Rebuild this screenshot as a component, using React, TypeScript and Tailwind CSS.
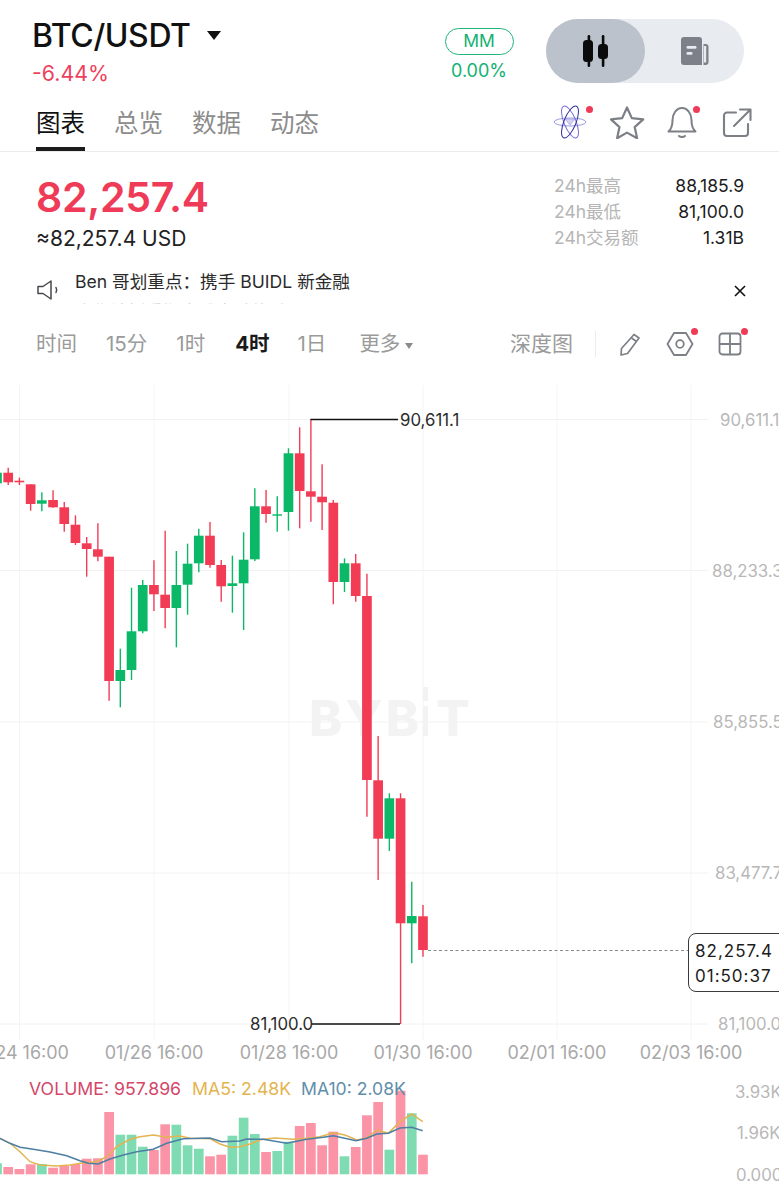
import React from 'react';

// top wick, body top, body bottom, bottom wick, up?, volume top
type Candle = [number, number, number, number, boolean, number];

const CANDLES: Candle[] = [
  [470, 472.7, 483.3, 484, true, 1163.3],
  [467.7, 472.7, 482.3, 485, false, 1167],
  [477.7, 480.7, 482.3, 485, false, 1169],
  [484.3, 484.3, 504, 510.7, false, 1164.3],
  [492.3, 500.3, 503.7, 511.3, true, 1164],
  [490.3, 500, 507.3, 507.7, false, 1167.7],
  [502, 507.3, 524, 531.7, false, 1166],
  [515.3, 524.7, 543, 545, false, 1164],
  [537, 543.3, 549, 576.7, false, 1158.7],
  [523.3, 549.3, 556.7, 561.3, false, 1158.3],
  [556.7, 556.7, 681, 700.7, false, 1112],
  [648.7, 670, 681, 707.3, true, 1134.7],
  [587.7, 631.3, 670, 680, true, 1134.7],
  [580, 585, 631.3, 633.3, true, 1146.7],
  [560.3, 585, 594.3, 611, false, 1150],
  [530.7, 594.7, 608, 628.3, false, 1124.3],
  [551, 585, 608, 647.3, true, 1124.7],
  [543.7, 563.7, 584.7, 614.7, true, 1145.3],
  [528.7, 535.7, 563.3, 572.3, true, 1148.7],
  [522, 535.7, 565, 567.7, false, 1156.3],
  [560, 565, 586.3, 601.7, false, 1154.7],
  [555.7, 583.3, 586, 612.7, true, 1135.7],
  [532.3, 559.7, 583.3, 630, true, 1117.7],
  [488.3, 506.3, 559.3, 561, true, 1134],
  [490, 506.3, 514, 522.7, false, 1152],
  [496.3, 514.3, 515.7, 531.7, true, 1151],
  [448.3, 453.3, 512, 530.7, true, 1141.7],
  [427.3, 453.3, 491, 528.3, false, 1126],
  [419.3, 491.3, 496.7, 521.7, false, 1123],
  [464.3, 496.7, 502.3, 530, false, 1145.3],
  [500, 502.7, 582, 604.3, false, 1131.7],
  [558.3, 563.3, 582, 592, true, 1156.3],
  [554, 563.3, 596, 601.7, false, 1147],
  [573.7, 596, 780, 816.7, false, 1115.3],
  [736, 780.3, 838.7, 880, false, 1102],
  [793.3, 798.3, 838.7, 851, true, 1149.7],
  [793.3, 798.3, 923.3, 1024, false, 1090.7],
  [881.7, 916, 923.3, 963.3, true, 1113.3],
  [905, 916.3, 950, 956.7, false, 1154.7],
];

const candleX = (i: number) => -3 + i * 11.21;

const MA5 =
  '0,1138.3 10,1143.3 20,1151.7 30,1161.7 40,1165 56.7,1166 70,1165 83.3,1162.7 96.7,1161.7 106.7,1156.7 116.7,1146.7 130,1139.3 140,1136.7 153.3,1135 166.7,1137.3 180,1136 190,1138.3 210,1138.7 220,1144 230,1147.3 240,1146.7 250,1144 260,1140 263.3,1139.3 275,1138 293.3,1139.3 306.7,1138.3 320,1136.7 333.3,1132.7 345,1135 356.7,1140 366.7,1138.3 376.7,1130 388.3,1133.3 400,1121.7 411.7,1114 422.7,1121.7';
const MA10 =
  '0,1138.3 10,1143.3 20,1147.3 33.3,1149.3 50,1152 66.7,1155.7 80,1160.7 88.3,1163.3 98.3,1164 110,1159 123.3,1155 136.7,1151.7 153.3,1149.3 166.7,1143.3 183.3,1138.7 210,1138 221.7,1141.7 240,1141 246.7,1139 263.3,1139.3 286.7,1143.3 306.7,1139.3 323.3,1137.3 333.3,1135.7 356,1140.7 366.7,1138.3 376.7,1134 388.3,1133.3 400,1128 411.7,1127.3 422.7,1130.7';

const GRID_Y = [419.5, 570.5, 722, 873, 1024];
const GRID_X = [19.5, 154, 289, 423, 557, 691];
const PRICES: [string, number, number][] = [
  ['90,611.1', 720, 426],
  ['88,233.3', 712, 577],
  ['85,855.5', 713, 728],
  ['83,477.7', 715, 879],
  ['81,100.0', 718, 1030],
];
const TIMES: [string, number][] = [
  ['01/24 16:00', 19.5],
  ['01/26 16:00', 154],
  ['01/28 16:00', 289],
  ['01/30 16:00', 423],
  ['02/01 16:00', 557],
  ['02/03 16:00', 691],
];

const RedDot = ({ className }: { className: string }) => (
  <span className={`absolute w-[7px] h-[7px] rounded-full bg-[#ef3b57] ${className}`} />
);

const CandleIcon = () => (
  <svg width="26" height="32" viewBox="0 0 26 32" fill="#0b0b0b">
    <rect x="4.600" y="0" width="2.600" height="32" rx="1.300" />
    <rect x="0" y="5" width="10" height="22" rx="3.500" />
    <rect x="18.800" y="0" width="2.600" height="32" rx="1.300" />
    <rect x="15" y="9" width="10" height="15" rx="3.500" />
  </svg>
);

const NewsIcon = () => (
  <svg width="28" height="28" viewBox="0 0 28 28">
    <path d="M3 0h15a3 3 0 0 1 3 3v25H3a3 3 0 0 1-3-3V3a3 3 0 0 1 3-3z" fill="#7d8088" />
    <path d="M22.500 7h2a3 3 0 0 1 3 3v15a3 3 0 0 1-3 3h-2z" fill="#7d8088" />
    <rect x="23" y="9" width="2.200" height="16.500" fill="#e8ebf0" />
    <rect x="5.500" y="9" width="10" height="2.800" rx="1.200" fill="#e8ebf0" />
    <rect x="5.500" y="15" width="6" height="2.800" rx="1.200" fill="#e8ebf0" />
  </svg>
);

const AtomIcon = () => (
  <svg width="36" height="34" viewBox="0 0 36 34" fill="none" strokeWidth="1">
    <ellipse cx="18" cy="17" rx="16" ry="4" stroke="#9a9ae6" />
    <ellipse cx="18" cy="17" rx="6" ry="17" transform="rotate(-22 18 17)" stroke="#7a6ed8" />
    <ellipse cx="18" cy="17" rx="6" ry="17" transform="rotate(22 18 17)" stroke="#2f2f9e" />
    <path d="M13 14h10l-5 6z" fill="#d6d2f4" stroke="#8f8fe0" strokeWidth="0.600" />
  </svg>
);

const StarIcon = () => (
  <svg width="36" height="34" viewBox="0 0 36 34" fill="none" stroke="#7c7f85" strokeWidth="2.200" strokeLinejoin="round">
    <path d="M18 2.500l4.800 10.600 11.400 1.300-8.500 7.700 2.400 11.200L18 27.600l-9.900 5.700 2.400-11.200L2 14.400l11.200-1.300z" />
  </svg>
);

const BellIcon = () => (
  <svg width="30" height="34" viewBox="0 0 30 34" fill="none" stroke="#7c7f85" strokeWidth="2" strokeLinecap="round" strokeLinejoin="round">
    <path d="M1.500 26.500h27c-3-2.500-4-6-4-11.500 0-6-3.900-12-9.500-12S5.500 9 5.500 15c0 5.500-1 9-4 11.500z" />
    <path d="M12 31c1.500 1.300 4.500 1.300 6 0" />
  </svg>
);

const ShareIcon = () => (
  <svg width="30" height="30" viewBox="0 0 30 30" fill="none" stroke="#7c7f85" strokeWidth="2.100" strokeLinecap="round" strokeLinejoin="round">
    <path d="M14 4.500H5a3 3 0 0 0-3 3V25a3 3 0 0 0 3 3h18a3 3 0 0 0 3-3v-9" />
    <path d="M12 18L28 2M18 1.500h10.500V12" />
  </svg>
);

const SpeakerIcon = () => (
  <svg width="22" height="22" viewBox="0 0 22 22" fill="none" stroke="#45474c" strokeWidth="1.500" strokeLinejoin="round">
    <path d="M1 7.500h5L14 2v18l-8-5.500H1z" />
    <path d="M19 8.500c.8 1.400.8 3.600 0 5" strokeLinecap="round" />
  </svg>
);

const PencilIcon = () => (
  <svg width="22" height="24" viewBox="0 0 22 24" fill="none" stroke="#7c7f85" strokeWidth="1.700" strokeLinejoin="round">
    <path d="M15 2.500l5 3.500L8.500 21.500 2 23l.5-6.500z" />
    <path d="M12.500 6l5 3.500" />
  </svg>
);

const HexIcon = () => (
  <svg width="28" height="26" viewBox="0 0 28 26" fill="none" stroke="#7c7f85" strokeWidth="1.800" strokeLinejoin="round">
    <path d="M8 2h12l6.500 11L20 24H8L1.500 13z" />
    <circle cx="14" cy="13" r="3.800" />
  </svg>
);

const GridIcon = () => (
  <svg width="24" height="24" viewBox="0 0 24 24" fill="none" stroke="#7c7f85" strokeWidth="1.800">
    <rect x="1.500" y="1.500" width="21" height="21" rx="3" />
    <path d="M12 1.500v21M1.500 12h21" />
  </svg>
);

const Chart = () => (
  <div className="relative h-[824px]">
    <svg width="779" height="824" viewBox="0 376 779 824" className="block">
      {GRID_X.map(x => (
        <line key={x} x1={x} x2={x} y1={385} y2={1040} stroke="#f4f4f5" strokeWidth="1" />
      ))}
      {GRID_Y.map(y => (
        <line key={y} x1={0} x2={708} y1={y} y2={y} stroke="#f2f2f3" strokeWidth="1" />
      ))}
      <text x="309" y="736" fontSize="50" fontWeight="800" letterSpacing="3" fill="#f3f3f4">BYB</text>
      <rect x="423" y="687" width="5" height="14" fill="#f3f3f4" />
      <rect x="423" y="706" width="5" height="30" fill="#f3f3f4" />
      <text x="436" y="736" fontSize="50" fontWeight="800" fill="#f3f3f4">T</text>

      {CANDLES.map((c, i) => {
        const x = candleX(i);
        const color = c[4] ? '#0bb868' : '#f23c55';
        return (
          <g key={i}>
            <line x1={x} x2={x} y1={c[0]} y2={c[3]} stroke={color} strokeWidth="1.400" />
            <rect x={x - 4.85} y={c[1]} width="9.700" height={c[2] - c[1]} fill={color} />
          </g>
        );
      })}

      <path d="M310.500 419.500H398" fill="none" stroke="#111" strokeWidth="1.400" />
      <path d="M312 1024H400" fill="none" stroke="#111" strokeWidth="1.400" />
      <text x="400" y="426" fontSize="16.800" fill="#2a2a2a">90,611.1</text>
      <text x="250" y="1030" fontSize="16.800" fill="#2a2a2a">81,100.0</text>
      <line x1="428" x2="688" y1="950.500" y2="950.500" stroke="#8a8a8a" strokeDasharray="3 2.500" />

      {PRICES.map(([label, x, y]) => (
        <text key={label} x={x} y={y} fontSize="16.800" fill="#b8b8b8">{label}</text>
      ))}
      {TIMES.map(([label, x]) => (
        <text key={label} x={x} y={1059} fontSize="18" textAnchor="middle" fill="#a8a8a8">{label}</text>
      ))}

      {CANDLES.map((c, i) => (
        <rect
          key={i}
          x={candleX(i) - 4.85}
          y={c[5]}
          width="9.700"
          height={1174.3 - c[5]}
          fill={c[4] ? '#7fdcb2' : '#fb94a6'}
        />
      ))}
      <polyline points={MA5} fill="none" stroke="#e3b44f" strokeWidth="1.500" />
      <polyline points={MA10} fill="none" stroke="#4c7fa3" strokeWidth="1.500" />

      <text x="29" y="1095" fontSize="17.700" fill="#d4476a">VOLUME: 957.896</text>
      <text x="192" y="1095" fontSize="17.700" fill="#e3b44f">MA5: 2.48K</text>
      <text x="301" y="1095" fontSize="17.600" fill="#5f8eaa">MA10: 2.08K</text>
      <text x="735" y="1098" fontSize="16.800" fill="#b8b8b8">3.93K</text>
      <text x="737" y="1139" fontSize="16.800" fill="#b8b8b8">1.96K</text>
      <text x="736" y="1181" fontSize="16.800" fill="#b8b8b8">0.000</text>
    </svg>

    {/* live price tag */}
    <div className="absolute left-[688px] top-[557px] w-[100px] h-[59px] rounded-[8px] border border-[#3a3a3a] bg-white pl-[6px] pt-[5px] text-[17px] leading-[25px] tracking-[1px] text-[#1c1c1c]">
      <div>82,257.4</div>
      <div>01:50:37</div>
    </div>
  </div>
);

export default function App() {
  return (
    <div className="w-[779px] h-[1200px] overflow-hidden bg-white [font-family:Inter,'Noto_Sans_CJK_SC',sans-serif]">
      {/* top bar */}
      <div className="flex h-[100px]">
        <div className="pl-[32px] pt-[16px]">
          <div className="flex items-center h-[40px] text-[32px] font-medium text-[#111] tracking-[-0.4px]">
            BTC/USDT
            <span className="ml-[16px] mt-[-2px] w-0 h-0 border-x-[7px] border-x-transparent border-t-[9px] border-t-[#111]" />
          </div>
          <div className="mt-[2px] text-[21.300px] leading-[30px] text-[#ee3f5c]">-6.44%</div>
        </div>
        <div className="ml-[auto] flex flex-col items-center pt-[28px] w-[70px]">
          <div className="w-[69px] h-[27px] rounded-full border border-[#1fb57a] flex items-center justify-center text-[17.500px] text-[#12b272]">MM</div>
          <div className="mt-[2px] text-[18px] leading-[28px] text-[#12b272]">0.00%</div>
        </div>
        <div className="ml-[32px] mr-[35px] mt-[19px] w-[198px] h-[64px] rounded-full bg-[#e8ebf0] flex">
          <div className="w-[99px] rounded-full bg-[#bcc2cc] flex items-center justify-center"><CandleIcon /></div>
          <div className="flex-1 flex items-center justify-center"><NewsIcon /></div>
        </div>
      </div>

      {/* tabs */}
      <div className="flex h-[52px] border-b border-[#ececec] pl-[36px] pr-[27px]">
        <div className="relative h-[51px] pb-[4px] flex items-center text-[24.500px] text-[#111]">
          图表
          <span className="absolute left-0 right-0 bottom-0 h-[4px] bg-[#1b1b1b]" />
        </div>
        {['总览', '数据', '动态'].map(t => (
          <div key={t} className="ml-[29px] h-[51px] pb-[4px] flex items-center text-[24.500px] text-[#8c8c8c]">{t}</div>
        ))}
        <div className="ml-auto flex items-center h-[44px]">
          <div className="relative"><AtomIcon /><RedDot className="right-[-5px] top-[1px]" /></div>
          <div className="ml-[21px]"><StarIcon /></div>
          <div className="relative ml-[22px]"><BellIcon /><RedDot className="right-[-3px] top-[1px]" /></div>
          <div className="ml-[25px] mt-[2px]"><ShareIcon /></div>
        </div>
      </div>

      {/* price */}
      <div className="flex h-[105px] pl-[36px] pr-[35px]">
        <div>
          <div className="mt-[22px] text-[41px] leading-[46px] font-semibold text-[#ef3b57] tracking-[-0.3px]">82,257.4</div>
          <div className="mt-[6px] text-[21px] leading-[26px] text-[#222]">≈82,257.4 USD</div>
        </div>
        <div className="ml-auto w-[190px] pt-[21px] text-[17.500px] leading-[26px]">
          {[
            ['24h最高', '88,185.9'],
            ['24h最低', '81,100.0'],
            ['24h交易额', '1.31B'],
          ].map(([label, val]) => (
            <div key={label} className="flex justify-between">
              <span className="text-[#b5b5b5]">{label}</span>
              <span className="text-[#1c1c1c]">{val}</span>
            </div>
          ))}
        </div>
      </div>

      {/* notice */}
      <div className="flex h-[55px] items-start pl-[37px] pr-[32px] pt-[10px]">
        <div className="mt-[12px]"><SpeakerIcon /></div>
        <div className="ml-[16px] h-[37px] overflow-hidden text-[17.600px] leading-[30px] text-[#2b2b2b]">
          <div>Ben 哥划重点：携手 BUIDL 新金融</div>
          <div className="text-[#c8c8c8]">合作计划重塑全球金融体系</div>
        </div>
        <span className="ml-auto mt-[17px] text-[#111]">
          <svg width="14" height="14" viewBox="0 0 14 14" stroke="currentColor" strokeWidth="1.600"><path d="M2 2l10 10M12 2L2 12" /></svg>
        </span>
      </div>

      {/* intervals */}
      <div className="flex items-center h-[64px] pl-[36px] pr-[37px] text-[20.500px] text-[#9a9a9a]">
        <span>时间</span>
        <span className="ml-[29px]">15分</span>
        <span className="ml-[29px]">1时</span>
        <span className="ml-[30px] font-bold text-[#1a1a1a]">4时</span>
        <span className="ml-[28px]">1日</span>
        <span className="ml-[33px]">更多</span>
        <span className="ml-[5px] mt-[3px] w-0 h-0 border-x-[4px] border-x-transparent border-t-[6px] border-t-[#8a8a8a]" />
        <span className="ml-auto text-[21px]">深度图</span>
        <span className="ml-[22px] w-px h-[26px] bg-[#ececec]" />
        <div className="ml-[23px]"><PencilIcon /></div>
        <div className="relative ml-[25px]"><HexIcon /><RedDot className="right-[-4px] top-[-3px]" /></div>
        <div className="relative ml-[24px]"><GridIcon /><RedDot className="right-[-6px] top-[-4px]" /></div>
      </div>

      <Chart />
    </div>
  );
}
